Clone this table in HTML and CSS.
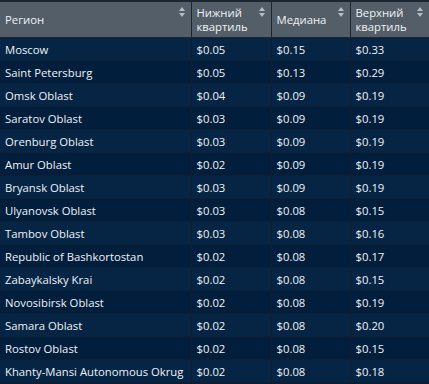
FILE: index.html
```html
<!DOCTYPE html>
<html>
<head>
<meta charset="utf-8">
<link rel="stylesheet" href="styles.css">
</head>
<body>
<table class="grid">
  <colgroup>
    <col class="c1"><col class="c2"><col class="c3"><col class="c4">
  </colgroup>
  <thead>
    <tr>
      <th><span class="lbl">Регион</span><span class="sort"></span></th>
      <th><span class="lbl">Нижний<br>квартиль</span><span class="sort"></span></th>
      <th><span class="lbl">Медиана</span><span class="sort"></span></th>
      <th><span class="lbl">Верхний<br>квартиль</span><span class="sort"></span></th>
    </tr>
  </thead>
  <tbody>
    <tr><td>Moscow</td><td>$0.05</td><td>$0.15</td><td>$0.33</td></tr>
    <tr><td>Saint Petersburg</td><td>$0.05</td><td>$0.13</td><td>$0.29</td></tr>
    <tr><td>Omsk Oblast</td><td>$0.04</td><td>$0.09</td><td>$0.19</td></tr>
    <tr><td>Saratov Oblast</td><td>$0.03</td><td>$0.09</td><td>$0.19</td></tr>
    <tr><td>Orenburg Oblast</td><td>$0.03</td><td>$0.09</td><td>$0.19</td></tr>
    <tr><td>Amur Oblast</td><td>$0.02</td><td>$0.09</td><td>$0.19</td></tr>
    <tr><td>Bryansk Oblast</td><td>$0.03</td><td>$0.09</td><td>$0.19</td></tr>
    <tr><td>Ulyanovsk Oblast</td><td>$0.03</td><td>$0.08</td><td>$0.15</td></tr>
    <tr><td>Tambov Oblast</td><td>$0.03</td><td>$0.08</td><td>$0.16</td></tr>
    <tr><td>Republic of Bashkortostan</td><td>$0.02</td><td>$0.08</td><td>$0.17</td></tr>
    <tr><td>Zabaykalsky Krai</td><td>$0.02</td><td>$0.08</td><td>$0.15</td></tr>
    <tr><td>Novosibirsk Oblast</td><td>$0.02</td><td>$0.08</td><td>$0.19</td></tr>
    <tr><td>Samara Oblast</td><td>$0.02</td><td>$0.08</td><td>$0.20</td></tr>
    <tr><td>Rostov Oblast</td><td>$0.02</td><td>$0.08</td><td>$0.15</td></tr>
    <tr><td>Khanty-Mansi Autonomous Okrug</td><td>$0.02</td><td>$0.08</td><td>$0.18</td></tr>
  </tbody>
</table>
</body>
</html>
```
FILE: styles.css
```css
html, body {
  margin: 0;
  padding: 0;
  background: #0a1e36;
  overflow: hidden;
}
.grid {
  width: 429px;
  border-collapse: collapse;
  table-layout: fixed;
  font-family: "Open Sans", "Noto Sans", sans-serif;
  font-size: 11.3px;
  color: #eef2f6;
  border-top: 2px solid #1c2630;
}
.c1 { width: 191px; }
.c2 { width: 80px; }
.c3 { width: 79px; }
.c4 { width: 79px; }
.grid th {
  position: relative;
  height: 34px;
  padding: 1px 4px 0 5px;
  background: #535e68;
  text-align: left;
  font-weight: normal;
  line-height: 14px;
  vertical-align: middle;
  border-left: 1px solid #1c2630;
  border-bottom: 1px solid #1c2630;
}
.grid th:first-child { border-left: none; }
.lbl { display: block; }
.sort {
  position: absolute;
  right: 5px;
  top: 5px;
  width: 7px;
  height: 10px;
}
.sort::before, .sort::after {
  content: "";
  position: absolute;
  left: 0;
  border-left: 3.5px solid transparent;
  border-right: 3.5px solid transparent;
}
.sort::before { top: 0; border-bottom: 4px solid #b6bcc2; }
.sort::after { bottom: 0; border-top: 4px solid #b6bcc2; }
.grid td {
  height: 20px;
  padding: 2px 4px 0 5px;
  white-space: nowrap;
  overflow: hidden;
  border-left: 1px solid #0f1f33;
  border-bottom: 1px solid #0f1f33;
  line-height: 14px;
}
.grid td:first-child { border-left: none; }
.grid tbody tr:nth-child(odd) td { background: #062544; }
.grid tbody tr:nth-child(even) td { background: #021e3d; }
```
